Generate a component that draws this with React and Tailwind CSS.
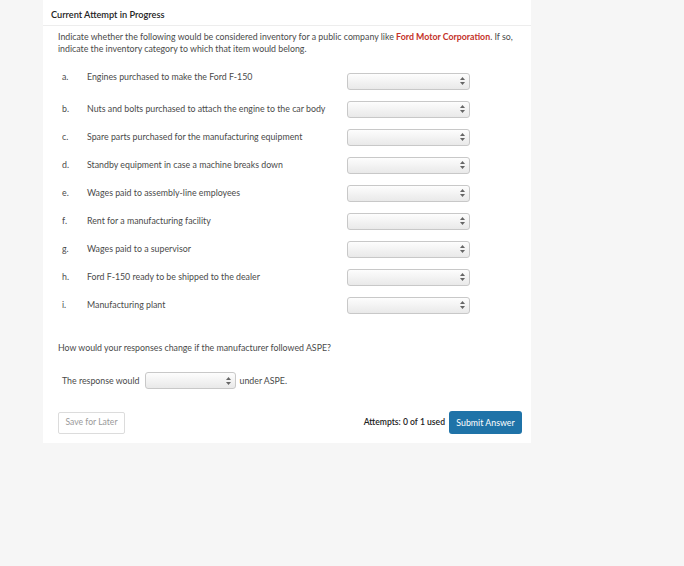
import React from 'react';

const ITEMS = [
  { letter: 'a.', text: 'Engines purchased to make the Ford F-150', lift: true },
  { letter: 'b.', text: 'Nuts and bolts purchased to attach the engine to the car body' },
  { letter: 'c.', text: 'Spare parts purchased for the manufacturing equipment' },
  { letter: 'd.', text: 'Standby equipment in case a machine breaks down' },
  { letter: 'e.', text: 'Wages paid to assembly-line employees' },
  { letter: 'f.', text: 'Rent for a manufacturing facility' },
  { letter: 'g.', text: 'Wages paid to a supervisor' },
  { letter: 'h.', text: 'Ford F-150 ready to be shipped to the dealer' },
  { letter: 'i.', text: 'Manufacturing plant' },
];

function FakeSelect({ className }) {
  return (
    <div
      className={`flex items-center justify-end h-[17px] rounded-[3px] border border-[#c8c8c8] bg-gradient-to-b from-[#fdfdfd] to-[#e9e9e9] pr-[4px] ${className}`}
    >
      <svg width="5" height="8" viewBox="0 0 5 8">
        <path d="M2.5 0 L5 3 L0 3 Z" fill="#666" />
        <path d="M2.5 8 L5 5 L0 5 Z" fill="#666" />
      </svg>
    </div>
  );
}

export default function App() {
  return (
    <div className="min-h-[566px] bg-[#f6f6f6] pl-[43px] font-['Lato','Liberation_Sans',sans-serif] text-[#333]">
      <div className="w-[488px] bg-white">
        {/* header */}
        <div className="h-[26px] pl-[8px] pt-[9px] border-b border-[#ededed] text-[9.2px] leading-[12px] font-semibold text-[#222]">
          Current Attempt in Progress
        </div>

        <div className="pl-[15px] pr-[9px]">
          <p className="pt-[5px] w-[464px] text-[8.8px] leading-[12px] text-[#4a4a4a]">
            Indicate whether the following would be considered inventory for a public company like{' '}
            <span className="font-bold text-[#c4322a]">Ford Motor Corporation</span>. If so,
            indicate the inventory category to which that item would belong.
          </p>

          {/* items */}
          <div className="mt-[12px] pl-[4px]">
            {ITEMS.map((it) => (
              <div key={it.letter} className="flex items-center h-[28px] text-[8.8px] text-[#4a4a4a]">
                <div className={`w-[25px] ${it.lift ? '-mt-[9px]' : ''}`}>{it.letter}</div>
                <div className={`w-[260px] ${it.lift ? '-mt-[9px]' : ''}`}>{it.text}</div>
                <FakeSelect className="w-[123px]" />
              </div>
            ))}
          </div>

          <p className="mt-[23px] text-[8.8px] leading-[12px] text-[#4a4a4a]">
            How would your responses change if the manufacturer followed ASPE?
          </p>

          <div className="mt-[18px] pl-[4px] flex items-center h-[17px] text-[8.8px] text-[#4a4a4a]">
            <span>The response would</span>
            <FakeSelect className="w-[91px] ml-[5px]" />
            <span className="ml-[4px]">under ASPE.</span>
          </div>

          {/* footer */}
          <div className="mt-[22px] pb-[9px] flex items-center justify-between">
            <button className="h-[22px] w-[67px] rounded-[2px] border border-[#dcdcdc] bg-white text-[8.6px] text-[#9a9a9a]">
              Save for Later
            </button>
            <div className="flex items-center gap-[4px]">
              <span className="text-[8.6px] font-semibold text-[#222]">Attempts: 0 of 1 used</span>
              <button className="h-[23px] w-[73px] rounded-[3px] bg-[#1f73a8] text-[8.8px] text-white">
                Submit Answer
              </button>
            </div>
          </div>
        </div>
      </div>
    </div>
  );
}
